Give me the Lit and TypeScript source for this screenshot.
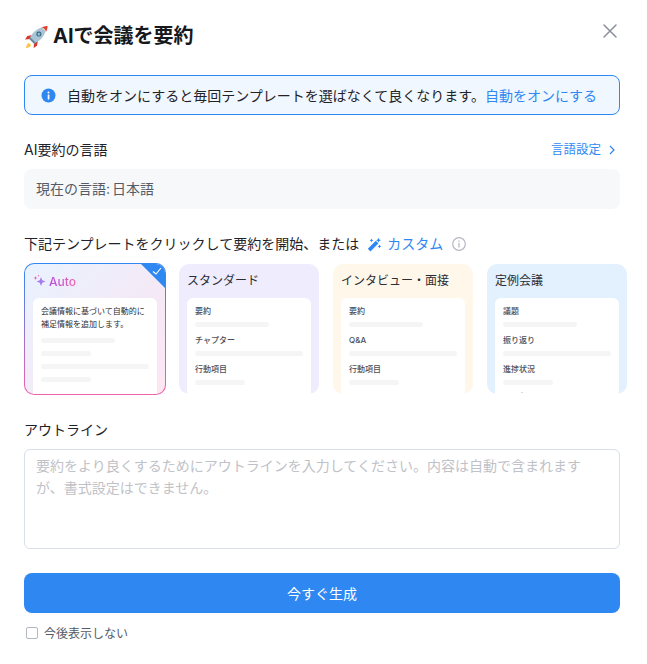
import { LitElement, css, html, svg } from 'lit'
import { customElement } from 'lit/decorators.js'

type Row = { label: string; bar: number }
type Template = { name: string; tint: string; rows: Row[]; clipped?: boolean }

const templates: Template[] = [
  {
    name: 'スタンダード',
    tint: '#efecfd',
    rows: [
      { label: '要約', bar: 74 },
      { label: 'チャプター', bar: 108 },
      { label: '行動項目', bar: 50 },
    ],
  },
  {
    name: 'インタビュー・面接',
    tint: '#fff7ea',
    rows: [
      { label: '要約', bar: 74 },
      { label: 'Q&A', bar: 108 },
      { label: '行動項目', bar: 50 },
    ],
  },
  {
    name: '定例会議',
    tint: '#e3f1ff',
    clipped: true,
    rows: [
      { label: '議題', bar: 74 },
      { label: '振り返り', bar: 108 },
      { label: '進捗状況', bar: 50 },
    ],
  },
]

const rocket = svg`
  <svg class="rocket" width="25" height="25" viewBox="0 0 26 26">
    <path d="M5 19.500c-1.600 1-2.600 3-3 5.500 2.500-.4 4.500-1.400 5.500-3z" fill="#f7c64a"/>
    <path d="M8.500 11.500 3.500 12.500 1 16l5.500-.5z" fill="#d8352b"/>
    <path d="M14.500 17.500 13.500 22.500 10 25l.5-5.500z" fill="#d8352b"/>
    <path d="M18.500 3.500c-4 1.300-7.500 3.700-10 7-1.200 1.600-2.300 3.500-3 5l5 5c1.600-.7 3.400-1.800 5-3 3.300-2.500 5.700-6 7-10z" fill="#a9c4d4"/>
    <path d="M5.500 15.500l5 5 1.800-1-5.800-5.800z" fill="#6c8797"/>
    <path d="M18.500 3.500c1.800-.9 4-1.500 6-1.500 0 2-.6 4.200-1.500 6-.6-1.800-2.700-3.900-4.500-4.500z" fill="#e2402f"/>
    <circle cx="15.500" cy="10.500" r="2.600" fill="#3c5a6c"/>
    <circle cx="15.500" cy="10.500" r="1.600" fill="#7cc0e8"/>
  </svg>
`

@customElement('app-root')
export class AppRoot extends LitElement {
  static styles = css`
    :host {
      display: block;
      width: 647px;
      height: 664px;
      overflow: hidden;
      background: #fff;
      font-family: Inter, 'Noto Sans CJK JP', sans-serif;
      color: #1f2329;
    }
    .page {
      display: flex;
      flex-direction: column;
      padding: 0 27px 0 24px;
    }
    .header {
      display: flex;
      justify-content: space-between;
      height: 75px;
    }
    .title {
      display: flex;
      align-items: center;
      gap: 4px;
      margin: 22px 0 0 0;
      height: 28px;
      font-size: 20px;
      line-height: 28px;
      font-weight: 700;
      color: #16181c;
    }
    .close {
      margin: 23px 2px 0 0;
    }
    .banner {
      display: flex;
      align-items: center;
      gap: 11px;
      box-sizing: border-box;
      height: 40px;
      padding: 0 16px;
      background: #f0f7ff;
      border: 1px solid #2f88f2;
      border-radius: 8px;
      font-size: 14px;
      white-space: nowrap;
    }
    a {
      color: #2f88f2;
      text-decoration: none;
    }
    .row {
      display: flex;
      align-items: center;
      justify-content: space-between;
      height: 20px;
      margin-top: 25px;
      font-size: 14px;
      line-height: 20px;
    }
    .more {
      display: flex;
      align-items: center;
      gap: 7px;
      font-size: 12.500px;
      padding-right: 4px;
    }
    .language {
      margin-top: 9px;
      height: 40px;
      padding: 0 12px;
      background: #f7f8fa;
      border-radius: 8px;
      font-size: 14px;
      line-height: 40px;
      word-spacing: -2px;
      color: #555b66;
    }
    .hint {
      display: flex;
      align-items: center;
      height: 20px;
      margin-top: 25px;
      font-size: 14px;
      line-height: 20px;
      white-space: nowrap;
    }
    .custom {
      display: flex;
      align-items: center;
      gap: 5px;
      margin: 0 9px 0 8px;
    }
    .cards {
      display: flex;
      align-items: center;
      gap: 14px;
      margin-top: 9px;
      width: 603px;
    }
    .card {
      flex: none;
      box-sizing: border-box;
      width: 140px;
      height: 130px;
      padding: 0 8px;
      border-radius: 10px;
      overflow: hidden;
    }
    .card.auto {
      position: relative;
      width: 142px;
      height: 132px;
      margin-right: -1px;
      border: 1px solid transparent;
      background:
        linear-gradient(135deg, #e9f2ff 0%, #f5e9f6 60%, #fde6f2 100%) padding-box,
        linear-gradient(180deg, #2f88f2 0%, #f062ac 100%) border-box;
    }
    .corner {
      position: absolute;
      top: -1px;
      right: -1px;
    }
    .name {
      height: 34px;
      font-size: 12px;
      line-height: 33px;
      white-space: nowrap;
      color: #2a2e36;
    }
    .auto .name {
      display: flex;
      align-items: center;
      gap: 3px;
      font-weight: 500;
    }
    .auto .name span {
      background: linear-gradient(90deg, #b44be0, #f062ac);
      -webkit-background-clip: text;
      background-clip: text;
      color: transparent;
    }
    .panel {
      box-sizing: border-box;
      height: 110px;
      padding: 7px 8px 0;
      background: #fff;
      border-radius: 6px 6px 0 0;
    }
    .note {
      margin-bottom: 8px;
      font-size: 8px;
      line-height: 12.500px;
      color: #2a2e36;
      white-space: nowrap;
    }
    .label {
      height: 12px;
      font-size: 8px;
      line-height: 12px;
      font-weight: 500;
      color: #4a4f59;
      white-space: nowrap;
    }
    .bar {
      height: 5px;
      margin: 5px 0 7px;
      border-radius: 3px;
      background: #f5f5f5;
    }
    .note + .bar,
    .bar.plain {
      margin: 0 0 8px;
    }
    .speck {
      width: 2px;
      height: 1px;
      margin: 1px 0 0 18px;
      background: #d5d7db;
    }
    textarea {
      display: block;
      box-sizing: border-box;
      width: 100%;
      height: 100px;
      margin-top: 9px;
      padding: 5px 11px;
      background: #fff;
      border: 1px solid #d9dee8;
      border-radius: 6px;
      outline: none;
      resize: none;
      font: inherit;
      font-size: 14px;
      line-height: 21.500px;
    }
    textarea::placeholder {
      color: #bfc2c7;
      opacity: 1;
    }
    .outline,
    .submit {
      width: 596px;
    }
    .submit {
      display: block;
      height: 40px;
      margin-top: 24px;
      padding: 0;
      border: none;
      border-radius: 8px;
      background: #2f88f2;
      color: #fff;
      font: inherit;
      font-size: 14px;
    }
    .skip {
      display: flex;
      align-items: center;
      gap: 6px;
      margin: 9px 0 0 2px;
      height: 20px;
      font-size: 12px;
      color: #555b66;
    }
    .box {
      box-sizing: border-box;
      width: 12px;
      height: 12px;
      margin-top: 2px;
      border: 1px solid #b4b8c0;
      border-radius: 2px;
    }
  `

  private renderTemplate(t: Template) {
    return html`
      <div class="card" style="background:${t.tint}">
        <div class="name">${t.name}</div>
        <div class="panel">
          ${t.rows.map(
            (r) => html`
              <div class="label">${r.label}</div>
              <div class="bar" style="width:${r.bar}px"></div>
            `
          )}
          ${t.clipped ? html`<div class="speck"></div>` : ''}
        </div>
      </div>
    `
  }

  render() {
    return html`
      <div class="page">
        <div class="header">
          <div class="title">${rocket}<span>AIで会議を要約</span></div>
          <svg class="close" width="16" height="16" viewBox="0 0 16 16">
            <path d="M2 2l12 12M14 2L2 14" stroke="#8a8f98" stroke-width="1.500" stroke-linecap="round" fill="none" />
          </svg>
        </div>

        <div class="banner">
          <svg width="15" height="15" viewBox="0 0 15 15">
            <circle cx="7.500" cy="7.500" r="7" fill="#2f88f2" />
            <rect x="6.700" y="6.500" width="1.700" height="5" rx=".5" fill="#fff" />
            <circle cx="7.500" cy="4.500" r="1" fill="#fff" />
          </svg>
          <span>自動をオンにすると毎回テンプレートを選ばなくて良くなります。<a>自動をオンにする</a></span>
        </div>

        <div class="row">
          <span>AI要約の言語</span>
          <a class="more">
            言語設定
            <svg width="8" height="10" viewBox="0 0 8 10">
              <path d="M2 1l4 4-4 4" stroke="#2f88f2" stroke-width="1.200" fill="none" />
            </svg>
          </a>
        </div>
        <div class="language">現在の言語: 日本語</div>

        <div class="hint">
          <span>下記テンプレートをクリックして要約を開始、または</span>
          <a class="custom">
            <svg width="15" height="15" viewBox="0 0 15 15">
              <path d="M.8 11.800 8.800 3.800l2.600 2.600-8 8z" fill="#2f88f2" />
              <path d="M11.500 .8l.8 1.700 1.700.8-1.700.8-.8 1.700-.8-1.700-1.700-.8 1.700-.8zM4.500 1.500l.6 1.300 1.300.6-1.300.6-.6 1.300-.6-1.300-1.300-.6 1.300-.6zM12.500 7.500l.6 1.300 1.300.6-1.300.6-.6 1.300-.6-1.300-1.300-.6 1.300-.6z" fill="#2f88f2" />
            </svg>
            カスタム
          </a>
          <svg width="14" height="14" viewBox="0 0 14 14">
            <circle cx="7" cy="7" r="6.300" stroke="#b4b8c0" stroke-width="1.200" fill="none" />
            <path d="M7 6v4.500M7 3.500v1.300" stroke="#b4b8c0" stroke-width="1.300" fill="none" />
          </svg>
        </div>

        <div class="cards">
          <div class="card auto">
            <div class="name">
              <svg width="13" height="14" viewBox="0 0 13 14">
                <path d="M8 3l1.200 3.300 3.300 1.200-3.300 1.200L8 12 6.800 8.700 3.500 7.500l3.300-1.200z" fill="#a779ee" />
                <path d="M2.500 2l.6 1.400 1.400.6-1.400.6-.6 1.400-.6-1.400L.5 4l1.400-.6z" fill="#f062ac" />
                <circle cx="5.500" cy="1.800" r=".7" fill="#f062ac" />
              </svg>
              <span>Auto</span>
            </div>
            <div class="panel">
              <div class="note">会議情報に基づいて自動的に<br />補足情報を追加します。</div>
              <div class="bar" style="width:74px"></div>
              <div class="bar plain" style="width:50px"></div>
              <div class="bar plain" style="width:108px"></div>
              <div class="bar plain" style="width:50px"></div>
            </div>
            <svg class="corner" width="26" height="26" viewBox="0 0 26 26">
              <path d="M0 0h26v26z" fill="#2f88f2" />
              <path d="M13 8.500l3 2.500 5-6" stroke="#fff" stroke-width="1.100" fill="none" />
            </svg>
          </div>
          ${templates.map((t) => this.renderTemplate(t))}
        </div>

        <div class="row">
          <span>アウトライン</span>
        </div>
        <textarea
          class="outline"
          placeholder="要約をより良くするためにアウトラインを入力してください。内容は自動で含まれますが、書式設定はできません。"
        ></textarea>

        <button class="submit">今すぐ生成</button>

        <div class="skip">
          <span class="box"></span>
          <span>今後表示しない</span>
        </div>
      </div>
    `
  }
}

declare global {
  interface HTMLElementTagNameMap {
    'app-root': AppRoot
  }
}
